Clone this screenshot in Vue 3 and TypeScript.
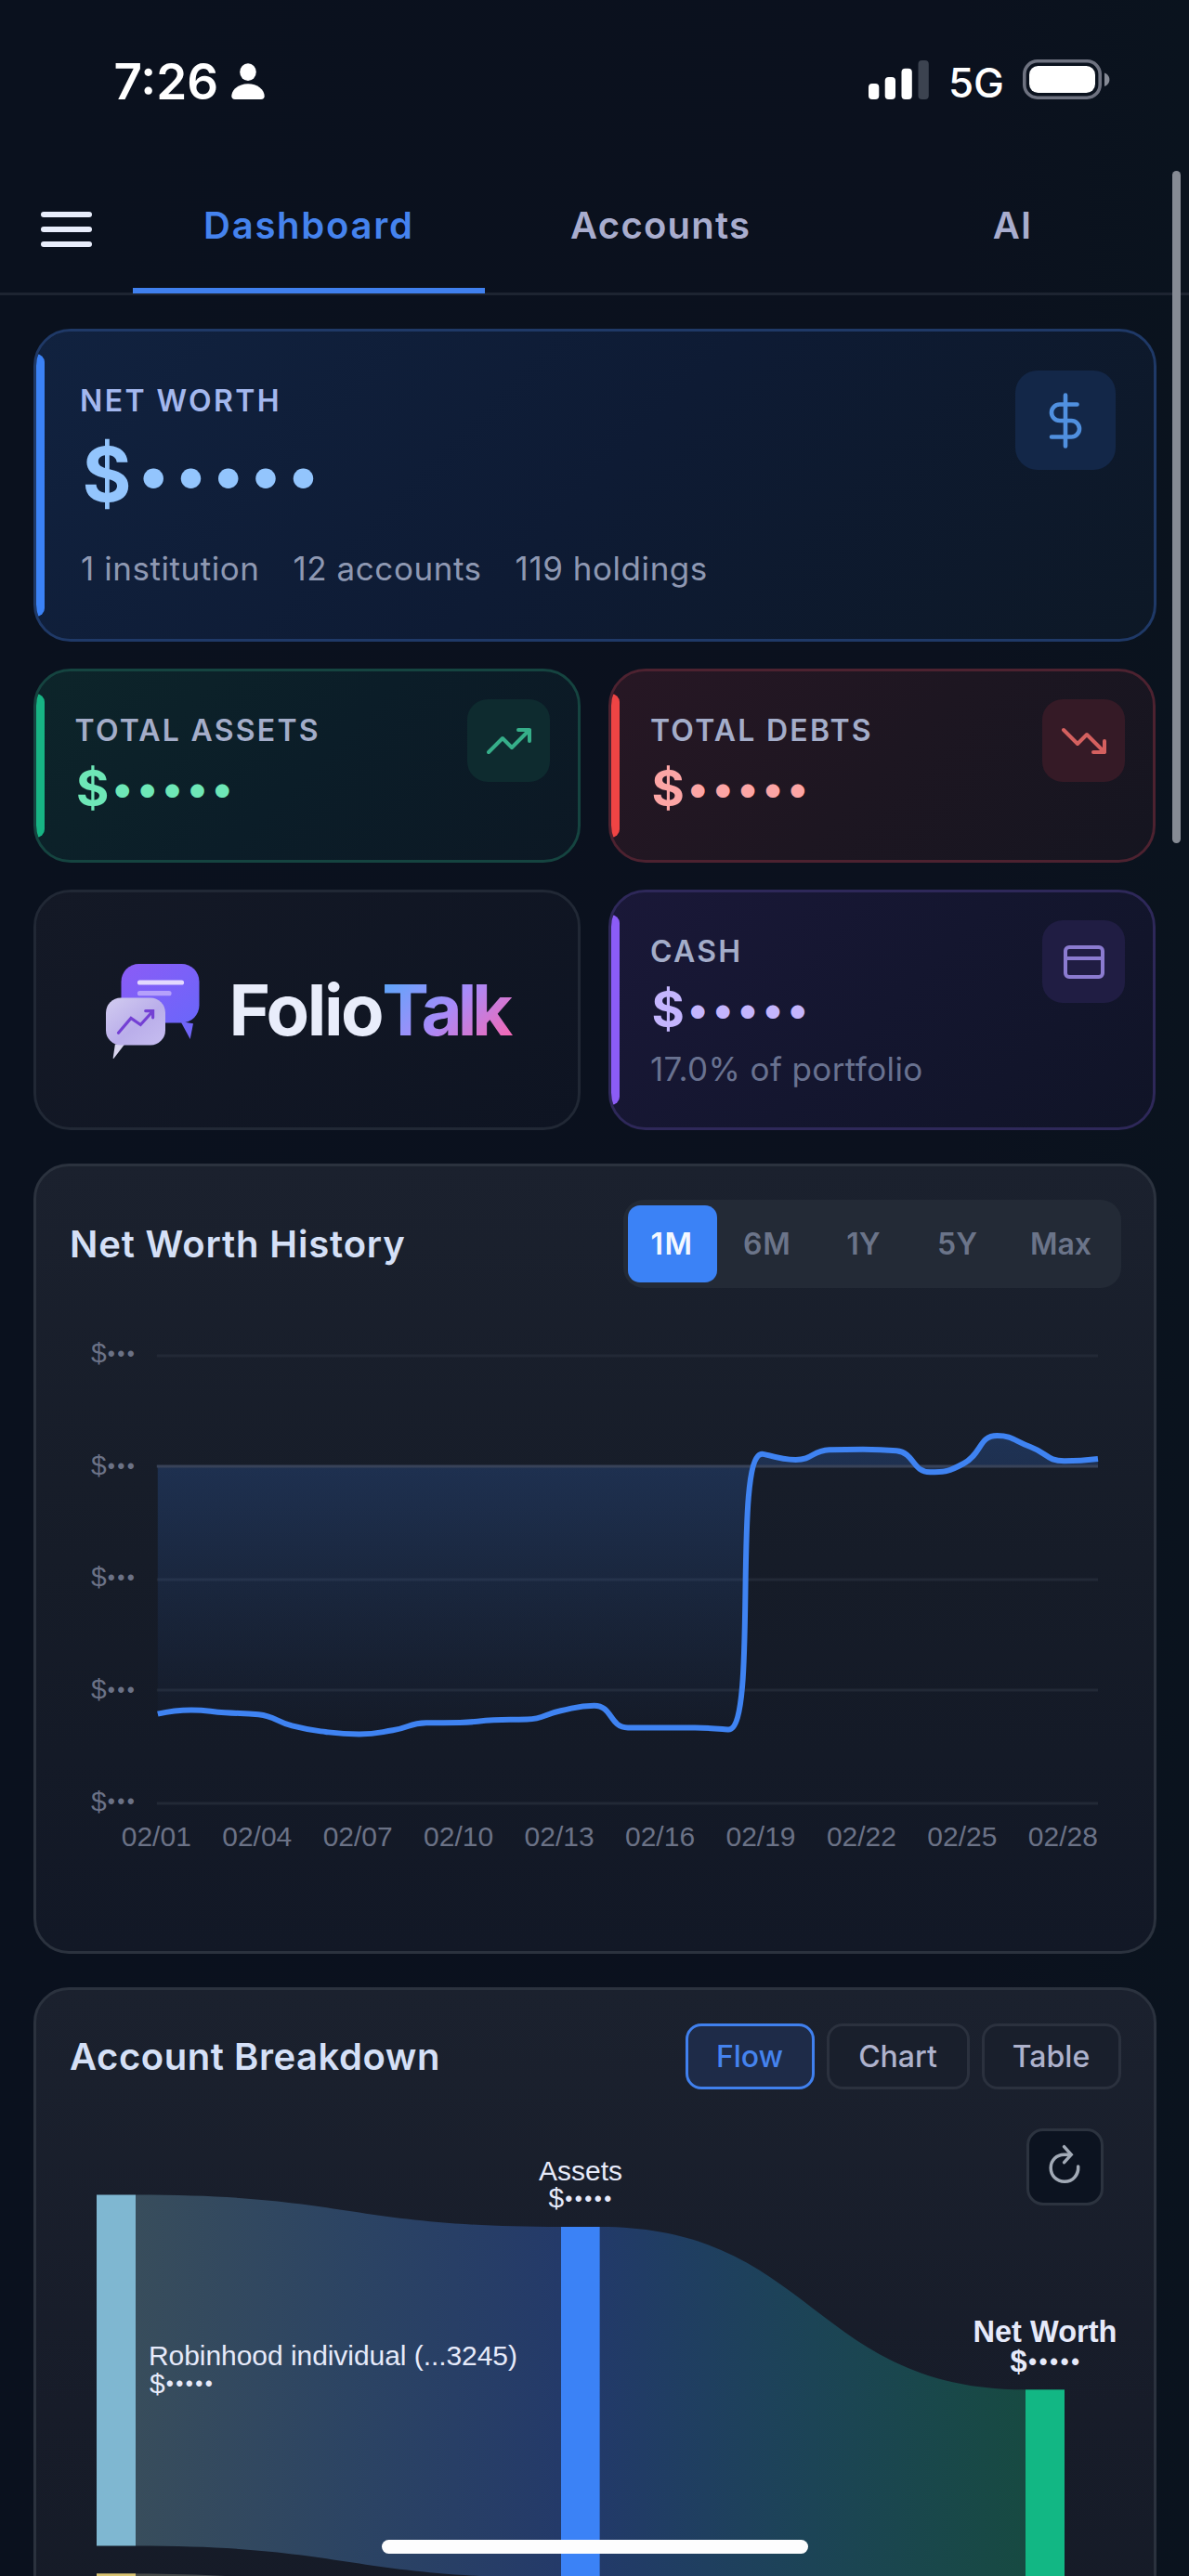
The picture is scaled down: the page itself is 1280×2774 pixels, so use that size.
<script setup lang="ts">
import { computed, ref } from 'vue'

type Point = [number, number]

interface StatCard {
  key: string
  label: string
  note?: string
  icon: 'up' | 'down' | 'card'
}

const tabs = ['Dashboard', 'Accounts', 'AI']
const activeTab = ref('Dashboard')

const summary = ['1 institution', '12 accounts', '119 holdings']
const hidden = '•••••'

const topCards: StatCard[] = [
  { key: 'assets', label: 'TOTAL ASSETS', icon: 'up' },
  { key: 'debts', label: 'TOTAL DEBTS', icon: 'down' },
]
const cashCard: StatCard = { key: 'cash', label: 'CASH', note: '17.0% of portfolio', icon: 'card' }

const ranges = ['1M', '6M', '1Y', '5Y', 'Max']
const activeRange = ref('1M')

const views = ['Flow', 'Chart', 'Table']
const activeView = ref('Flow')

// Net worth history plot
const plot = { left: 94.8, right: 1107, step: 36.15, axisY: 192 }
const gridLines = [73, 314, 433, 555]
const yLabels = [80, 201, 321, 442, 562.5]
const xLabels = ['02/01', '02/04', '02/07', '02/10', '02/13', '02/16', '02/19', '02/22', '02/25', '02/28']
const history = [
  458.7, 454.5, 457.3, 459.3, 471.4, 478, 480.4, 476.3, 468.3, 468, 465.2, 464.5, 455.2, 449.7, 473.5,
  473.5, 473.5, 475.5, 178.7, 185, 174.3, 173.7, 175.3, 198.3, 189, 159, 171.3, 186.3, 184,
]

function clamp(v: number, a: number, b: number): number {
  return Math.max(Math.min(a, b), Math.min(Math.max(a, b), v))
}

// Smoothed curve whose control points never overshoot the neighbouring values
function smoothPath(points: Point[], smooth: number): string {
  let d = `M${points[0][0]} ${points[0][1]}`
  let out: Point = points[0]
  for (let i = 1; i < points.length; i++) {
    const [x, y] = points[i]
    const prev = points[i - 1]
    let cpIn: Point = [x, y]
    let nextOut: Point = [x, y]
    if (i < points.length - 1) {
      const next = points[i + 1]
      const lenPrev = Math.hypot(x - prev[0], y - prev[1])
      const lenNext = Math.hypot(next[0] - x, next[1] - y)
      const ratio = lenNext / (lenNext + lenPrev)
      nextOut = [
        clamp(x + (next[0] - prev[0]) * smooth * ratio, next[0], x),
        clamp(y + (next[1] - prev[1]) * smooth * ratio, next[1], y),
      ]
      cpIn = [
        clamp(x - ((nextOut[0] - x) * lenPrev) / lenNext, prev[0], x),
        clamp(y - ((nextOut[1] - y) * lenPrev) / lenNext, prev[1], y),
      ]
      nextOut = [
        x + ((x - cpIn[0]) * lenNext) / lenPrev,
        y + ((y - cpIn[1]) * lenNext) / lenPrev,
      ]
    }
    const nums = [...out, ...cpIn, x, y].map((n) => n.toFixed(2))
    d += `C${nums.join(' ')}`
    out = nextOut
  }
  return d
}

const linePath = computed(() =>
  smoothPath(history.map((y, i): Point => [plot.left + i * plot.step, y]), 0.5),
)
const areaPath = computed(
  () => `${linePath.value}L${plot.left + 28 * plot.step} ${plot.axisY}L${plot.left} ${plot.axisY}Z`,
)
</script>

<template>
  <div class="app">
    <div class="status">
      <div class="clock">
        <span>7:26</span>
        <svg width="36" height="39" viewBox="0 0 36 39" fill="#fff">
          <ellipse cx="18" cy="9.6" rx="8.8" ry="9.4" />
          <path d="M4 39C1.6 39 .3 37.8.3 35.600C.3 28.500 8 22.300 18 22.300S35.700 28.500 35.700 35.600C35.700 37.800 34.400 39 32 39Z" />
        </svg>
      </div>
      <div class="signals">
        <svg width="65" height="42" viewBox="0 0 65 42" fill="#fff">
          <rect x="0" y="25" width="11.300" height="17" rx="4" />
          <rect x="17.700" y="18" width="11.300" height="24" rx="4" />
          <rect x="35.500" y="8.700" width="11.300" height="33.300" rx="4" />
          <rect x="53.500" y="0" width="11.300" height="42" rx="4" fill="#3c4350" />
        </svg>
        <span class="net">5G</span>
        <svg class="battery" width="94" height="43" viewBox="0 0 94 43">
          <rect x="1.800" y="1.800" width="81.400" height="39.400" rx="14" fill="none" stroke="#6e7280" stroke-width="3.600" />
          <rect x="7" y="7" width="71" height="29" rx="9.500" fill="#fff" />
          <path d="M88 14.500C91 15.500 93.400 18.200 93.400 21.700S91 28 88 29Z" fill="#868b96" />
        </svg>
      </div>
    </div>

    <nav class="nav">
      <button class="menu" aria-label="Menu"><i /><i /><i /></button>
      <button
        v-for="t in tabs"
        :key="t"
        class="tab"
        :class="{ active: t === activeTab }"
        @click="activeTab = t"
      >{{ t }}</button>
    </nav>

    <main class="main">
      <section class="card worth">
        <div>
          <div class="label">NET WORTH</div>
          <div class="value">$<span class="dots">{{ hidden }}</span></div>
          <div class="summary"><span v-for="s in summary" :key="s">{{ s }}</span></div>
        </div>
        <div class="badge">
          <svg width="60" height="60" viewBox="0 0 24 24" class="stroke">
            <path d="M12 1v22M17 5H9.500a3.500 3.500 0 0 0 0 7h5a3.500 3.500 0 0 1 0 7H6" />
          </svg>
        </div>
      </section>

      <div class="grid">
        <section v-for="c in topCards" :key="c.key" class="card small" :class="c.key">
          <div>
            <div class="label">{{ c.label }}</div>
            <div class="value">$<span class="dots">{{ hidden }}</span></div>
          </div>
          <div class="badge">
            <svg width="48" height="48" viewBox="0 0 24 24" class="stroke">
              <path v-if="c.icon === 'up'" d="M23 6l-9.500 9.500-5-5L1 18M17 6h6v6" />
              <path v-else d="M23 18l-9.500-9.500-5 5L1 6M17 18h6v-6" />
            </svg>
          </div>
        </section>

        <section class="card brand">
          <svg class="logo" width="101" height="103" viewBox="0 0 101 103">
            <defs>
              <linearGradient id="bubbleBack" x1="0" y1="0" x2="1" y2="1">
                <stop offset="0" stop-color="#8b5cf6" />
                <stop offset="1" stop-color="#6a66fa" />
              </linearGradient>
              <linearGradient id="bubbleFront" x1="0" y1="0" x2="1" y2="1">
                <stop offset="0" stop-color="#d2ccf0" />
                <stop offset=".55" stop-color="#baaeea" />
                <stop offset="1" stop-color="#c6bdf0" />
              </linearGradient>
            </defs>
            <rect x="16.500" y="0" width="84" height="63.500" rx="19" fill="url(#bubbleBack)" />
            <path d="M80.500 62L94 64.300L90.700 81Z" fill="#7065f8" />
            <path d="M36.500 20H81.500" stroke="#e3d9fe" stroke-width="5.200" stroke-linecap="round" />
            <path d="M36.500 31.700H68" stroke="#b5a0fb" stroke-width="5.200" stroke-linecap="round" />
            <path d="M9.900 86.500H20.200L8.500 101.800C8 102.200 7.600 102 7.700 101.300Z" fill="#d9d5ef" />
            <rect x="0" y="36.500" width="64" height="51" rx="16" fill="url(#bubbleFront)" />
            <path d="M13.500 74.300L27 58.500L37.300 65.500L50 51.500M42.700 50.600H50.600V57.800" fill="none" stroke="#7440d4" stroke-width="3.200" stroke-linecap="round" stroke-linejoin="miter" />
          </svg>
          <div class="wordmark">Folio<span class="talk"><span class="tee">T</span>alk</span></div>
        </section>

        <section class="card small cash">
          <div>
            <div class="label">{{ cashCard.label }}</div>
            <div class="value">$<span class="dots">{{ hidden }}</span></div>
            <div class="note">{{ cashCard.note }}</div>
          </div>
          <div class="badge">
            <svg width="48" height="48" viewBox="0 0 24 24" class="stroke">
              <rect x="2" y="4" width="20" height="16" rx="2" />
              <path d="M2 10h20" />
            </svg>
          </div>
        </section>
      </div>

      <section class="panel history">
        <header class="panel-head">
          <h2>Net Worth History</h2>
          <div class="segment">
            <button
              v-for="r in ranges"
              :key="r"
              :class="['r' + r, { active: r === activeRange }]"
              @click="activeRange = r"
            >{{ r }}</button>
          </div>
        </header>
        <svg class="plot" width="1131" height="640" viewBox="0 0 1131 640">
          <defs>
            <linearGradient id="area" x1="0" y1="0" x2="0" y2="1">
              <stop offset="0" stop-color="#3b82f6" stop-opacity=".21" />
              <stop offset="1" stop-color="#3b82f6" stop-opacity="0" />
            </linearGradient>
          </defs>
          <path v-for="y in gridLines" :key="y" :d="`M${plot.left - 1} ${y}H${plot.right}`" class="rule" />
          <path :d="areaPath" fill="url(#area)" />
          <path :d="`M${plot.left - 1} ${plot.axisY}H${plot.right}`" class="axis" />
          <path :d="linePath" class="line" />
          <text v-for="y in yLabels" :key="y" x="23" :y="y" class="tick">$<tspan class="mask" dx="1" dy="-1.500">•••</tspan></text>
          <text
            v-for="(l, i) in xLabels"
            :key="l"
            :x="plot.left - 1.500 + i * plot.step * 3"
            y="601"
            class="tick mid"
          >{{ l }}</text>
        </svg>
      </section>

      <section class="panel breakdown">
        <header class="panel-head">
          <h2>Account Breakdown</h2>
          <div class="views">
            <button
              v-for="v in views"
              :key="v"
              :class="['v' + v, { active: v === activeView }]"
              @click="activeView = v"
            >{{ v }}</button>
          </div>
        </header>
        <div class="flow">
          <svg width="1131" height="620" viewBox="0 0 1131 620">
            <defs>
              <linearGradient id="toAssets" x1="0" x2="1">
                <stop offset="0" stop-color="#384d5c" />
                <stop offset=".5" stop-color="#2c4463" />
                <stop offset="1" stop-color="#243a69" />
              </linearGradient>
              <linearGradient id="toWorth" x1="0" x2="1">
                <stop offset="0" stop-color="#223a69" />
                <stop offset=".5" stop-color="#1c4456" />
                <stop offset="1" stop-color="#174a42" />
              </linearGradient>
              <linearGradient id="cashToAssets" x1="0" x2="1">
                <stop offset="0" stop-color="#4a4d49" />
                <stop offset="1" stop-color="#243a69" />
              </linearGradient>
            </defs>
            <path d="M71 113.500C300 113.500 300 148 529 148V526C300 526 300 491.500 71 491.500Z" fill="url(#toAssets)" />
            <path d="M71 521.500C300 521.500 300 556 529 556V620H71Z" fill="url(#cashToAssets)" />
            <path d="M570.500 148C800 148 800 323.300 1029 323.300V620H570.500Z" fill="url(#toWorth)" />
            <rect x="29" y="113.500" width="42" height="378" fill="#7fb7d1" />
            <rect x="29" y="521.300" width="42" height="99" fill="#d9c472" />
            <rect x="529" y="148" width="41.700" height="472" fill="#3b82f6" />
            <rect x="1029" y="323.300" width="42" height="297" fill="#12b784" />
            <text class="node mid" x="550" y="97.800">Assets</text>
            <text class="node" x="515.500" y="127">$<tspan class="mask" dx="1" dy="-1.500">{{ hidden }}</tspan></text>
            <text class="node" x="85" y="297" textLength="397">Robinhood individual (...3245)</text>
            <text class="node" x="86" y="326.800">$<tspan class="mask" dx="1" dy="-1.500">{{ hidden }}</tspan></text>
            <text class="node strong mid" x="1050" y="271.700">Net Worth</text>
            <text class="node strong" x="1012.500" y="303.700">$<tspan class="mask" dx="1.500" dy="-1.500">{{ hidden }}</tspan></text>
          </svg>
          <button class="refresh" aria-label="Reset">
            <svg width="40" height="40" viewBox="0 0 40 40">
              <path d="M34.700 19C35.200 27.500 29.500 35.300 20 35.300C11.500 35.300 5.200 29 5.200 20.600C5.200 12.300 11.500 6.300 19.500 6.300H26" />
              <path d="M19.500-2.300L27.200 6.200L19.600 14.600" />
            </svg>
          </button>
        </div>
      </section>
    </main>

    <div class="scrollbar" />
    <div class="home" />
  </div>
</template>

<style>
html,
body {
  background: #0a111d;
}
</style>

<style scoped>
.app {
  position: relative;
  width: 1280px;
  height: 2774px;
  overflow: hidden;
  background: linear-gradient(90deg, #0a111e 0%, #0b111e 80%, #0a131e 100%);
  color: #fff;
  font-family: 'Inter', sans-serif;
}
.app * {
  box-sizing: border-box;
}
button {
  margin: 0;
  padding: 0;
  border: 0;
  background: none;
  color: inherit;
  font: inherit;
}
svg {
  display: block;
  flex: none;
}

.status {
  display: flex;
  justify-content: space-between;
  height: 196px;
  padding: 0 85px 0 122.500px;
}
.clock {
  display: flex;
  align-items: center;
  gap: 14px;
  height: 175px;
  font-size: 53px;
  font-weight: 600;
}
.signals {
  display: flex;
  align-items: center;
  height: 171px;
}
.net {
  margin: 6px 0 0 21px;
  font-size: 44px;
  font-weight: 500;
  letter-spacing: -0.300px;
  line-height: 50px;
}
.battery {
  margin-left: 20.500px;
}

.nav {
  display: flex;
  height: 122px;
  border-bottom: 3px solid #1d2431;
}
.menu {
  display: flex;
  flex-direction: column;
  justify-content: center;
  gap: 10.400px;
  width: 143px;
  height: 102px;
  padding-left: 43.700px;
}
.menu i {
  display: block;
  width: 55.500px;
  height: 6px;
  border-radius: 3px;
  background: #e8edfb;
}
.tab {
  width: 378.800px;
  height: 120px;
  padding-bottom: 20px;
  border-bottom: 6.500px solid transparent;
  color: #a9adce;
  font-size: 40px;
  font-weight: 600;
  letter-spacing: 1.250px;
  line-height: 94px;
}
.tab.active {
  border-color: #4080ee;
  color: #4583ee;
  letter-spacing: 1.750px;
}

.main {
  padding: 36px 35.500px 0 36px;
}
.card {
  position: relative;
  display: flex;
  justify-content: space-between;
  align-items: flex-start;
  overflow: hidden;
  border: 3px solid;
  border-radius: 40px;
}
.card::before {
  content: '';
  position: absolute;
  left: 0;
  top: 24px;
  bottom: 24px;
  width: 9px;
  border-radius: 0 9px 9px 0;
  background: var(--accent);
}
.label {
  height: 40px;
  color: #a4adc9;
  font-size: 32px;
  font-weight: 600;
  letter-spacing: 2.250px;
  line-height: 40px;
  white-space: nowrap;
}
.value {
  font-weight: 700;
  white-space: nowrap;
}
.dots {
  position: relative;
}
.badge {
  display: flex;
  flex: none;
  align-items: center;
  justify-content: center;
}
.stroke {
  fill: none;
  stroke: currentColor;
  stroke-width: 2;
  stroke-linecap: round;
  stroke-linejoin: round;
}

.worth {
  --accent: #3b82f6;
  height: 337px;
  padding: 55px 41px 0 47px;
  border-color: #1f3967;
  background: linear-gradient(135deg, #11223f 0%, #0e1b34 50%, #0d1826 100%);
  background-clip: padding-box;
}
.worth .label {
  color: #a3b7ee;
  letter-spacing: 2.400px;
}
.worth .value {
  height: 90px;
  margin: 13.500px 0 0 2.400px;
  color: #93c5fd;
  font-size: 81px;
  line-height: 90px;
}
.worth .dots {
  top: -4.500px;
  margin-left: 7.600px;
  font-size: 68.500px;
  letter-spacing: 7.800px;
  line-height: 1;
}
.summary {
  display: flex;
  gap: 36px;
  height: 44px;
  margin-top: 34px;
  padding-left: 1px;
  color: #8e98b2;
  font-size: 35px;
  letter-spacing: 0.550px;
  line-height: 44px;
}
.worth .badge {
  width: 107.500px;
  height: 107px;
  margin-top: -13px;
  border-radius: 24px;
  background: #132748;
  color: #5090df;
}
.worth .stroke {
  stroke-width: 1.850;
}

.grid {
  display: grid;
  grid-template-columns: 589.300px 589px;
  grid-template-rows: 208.500px 259px;
  gap: 29.500px 30.200px;
  margin-top: 29px;
}
.small {
  padding: 44px 30px 0 41.500px;
}
.small .value {
  height: 60px;
  margin: 12.300px 0 0 1.500px;
  font-size: 54px;
  line-height: 60px;
}
.small .dots {
  top: -3px;
  margin-left: 3.500px;
  font-size: 46.500px;
  letter-spacing: 4.800px;
  line-height: 1;
}
.small .badge {
  width: 89px;
  height: 89px;
  margin-top: -14px;
  border-radius: 22px;
}
.assets {
  --accent: #17b484;
  border-color: #154440;
  background: linear-gradient(135deg, #0d252a 0%, #0b1d28 50%, #0c1824 100%);
  background-clip: padding-box;
}
.assets .value {
  color: #6ee7b7;
}
.assets .badge {
  background: #0e2b2f;
  color: #36ae89;
}
.debts {
  --accent: #ef4444;
  border-color: #4d2230;
  background: linear-gradient(135deg, #271724 0%, #1d1621 50%, #151520 100%);
  background-clip: padding-box;
}
.debts .value {
  color: #fca5a5;
}
.debts .badge {
  background: #351a26;
  color: #d4605f;
}
.cash {
  --accent: #8b5cf6;
  border-color: #2e2859;
  background: linear-gradient(135deg, #1a1838 0%, #14162f 50%, #101427 100%);
  background-clip: padding-box;
}
.cash .value {
  color: #c4b5fd;
}
.cash .badge {
  background: #201d43;
  color: #8b7bd0;
}
.note {
  height: 44px;
  margin-top: 12px;
  color: #697290;
  font-size: 35px;
  letter-spacing: 0.400px;
  line-height: 44px;
  white-space: nowrap;
}
.brand {
  --accent: transparent;
  justify-content: flex-start;
  border-color: #212835;
  background: linear-gradient(135deg, #141926 0%, #0e1422 100%);
  background-clip: padding-box;
}
.logo {
  margin: 77px 0 0 74.500px;
}
.wordmark {
  margin: 76px 0 0 32px;
  color: #e9edfb;
  font-size: 76px;
  font-weight: 700;
  letter-spacing: -2.400px;
  line-height: 101px;
  white-space: nowrap;
}
.talk {
  padding-right: 5px;
  background: linear-gradient(135deg, #60a5fa 10%, #a78bfa 50%, #f468b4 92%);
  -webkit-background-clip: text;
  background-clip: text;
  color: transparent;
  letter-spacing: -5px;
}
.tee {
  letter-spacing: -8.500px;
}

.panel {
  border: 3px solid #2b323e;
  border-radius: 38px;
  background: linear-gradient(180deg, #1b212e 0%, #161c28 50%, #121826 100%);
}
.panel-head {
  display: flex;
  align-items: center;
  justify-content: space-between;
  padding: 36px 35px 0 36px;
}
h2 {
  margin: 1px 0 0;
  color: #d5e0f7;
  font-size: 40px;
  font-weight: 600;
  letter-spacing: 0.550px;
  line-height: 50px;
  white-space: nowrap;
}
.history {
  height: 851px;
  margin-top: 35.500px;
}
.history h2 {
  letter-spacing: 0.850px;
}
.segment {
  display: flex;
  gap: 4px;
  height: 95px;
  padding: 6px 4.500px;
  border-radius: 22px;
  background: #232a36;
  color: #6b7489;
  font-size: 32px;
  font-weight: 600;
}
.segment button {
  border-radius: 13px;
}
.r1M { width: 96px; letter-spacing: 1.500px; }
.r6M { width: 100.500px; letter-spacing: 0.800px; }
.r1Y { width: 99px; }
.r5Y { width: 95px; }
.rMax { width: 120px; }
.segment .active {
  background: #3b82f6;
  color: #f4f8ff;
}
.plot {
  margin-left: 36px;
}
.rule {
  stroke: #222936;
  stroke-width: 3;
}
.axis {
  stroke: #384258;
  stroke-width: 3;
}
.line {
  fill: none;
  stroke: #3f83f2;
  stroke-width: 6;
  stroke-linejoin: bevel;
}
.tick {
  fill: #6b7286;
  font: 400 30px 'Liberation Sans', Arial, sans-serif;
}
.mid {
  text-anchor: middle;
}
.mask {
  font-size: 23px;
  letter-spacing: 2.450px;
}

.breakdown {
  height: 760px;
  margin-top: 36px;
  background: linear-gradient(180deg, #1b212e 0%, #171c29 60%, #151b27 100%);
}
.views {
  display: flex;
  gap: 13px;
  font-size: 32px;
  font-weight: 500;
  letter-spacing: 0.500px;
}
.views button {
  height: 71px;
  border: 3px solid #2b313e;
  border-radius: 17px;
  background: #191f2c;
  color: #aeb2cc;
}
.views .vFlow { width: 139px; }
.views .vChart { width: 154px; }
.views .vTable { width: 150px; }
.views .active {
  border-color: #4080ee;
  background: #1e2b48;
  color: #4583ee;
}
.flow {
  position: relative;
  width: 1131px;
  margin-left: 36px;
}
.node {
  fill: #e6eafa;
  font: 400 30px 'Liberation Sans', Arial, sans-serif;
}
.strong {
  font-size: 32.600px;
  font-weight: 700;
}
.strong .mask {
  font-size: 25px;
  letter-spacing: 2.800px;
}
.refresh {
  position: absolute;
  top: 42px;
  right: 18.500px;
  display: flex;
  align-items: center;
  justify-content: center;
  width: 82.500px;
  height: 83px;
  border: 3px solid #2c333f;
  border-radius: 18px;
  background: #0c1320;
}
.refresh svg {
  overflow: visible;
  margin-top: 2px;
  fill: none;
  stroke: #a2aab6;
  stroke-width: 3.500;
  stroke-linecap: round;
}

.scrollbar {
  position: absolute;
  top: 184px;
  right: 9px;
  width: 9.500px;
  height: 724px;
  border-radius: 5px;
  background: #868b94;
}
.home {
  position: absolute;
  top: 2734.500px;
  left: 410.500px;
  width: 459px;
  height: 15.500px;
  border-radius: 8px;
  background: #fdfdfe;
}
</style>
